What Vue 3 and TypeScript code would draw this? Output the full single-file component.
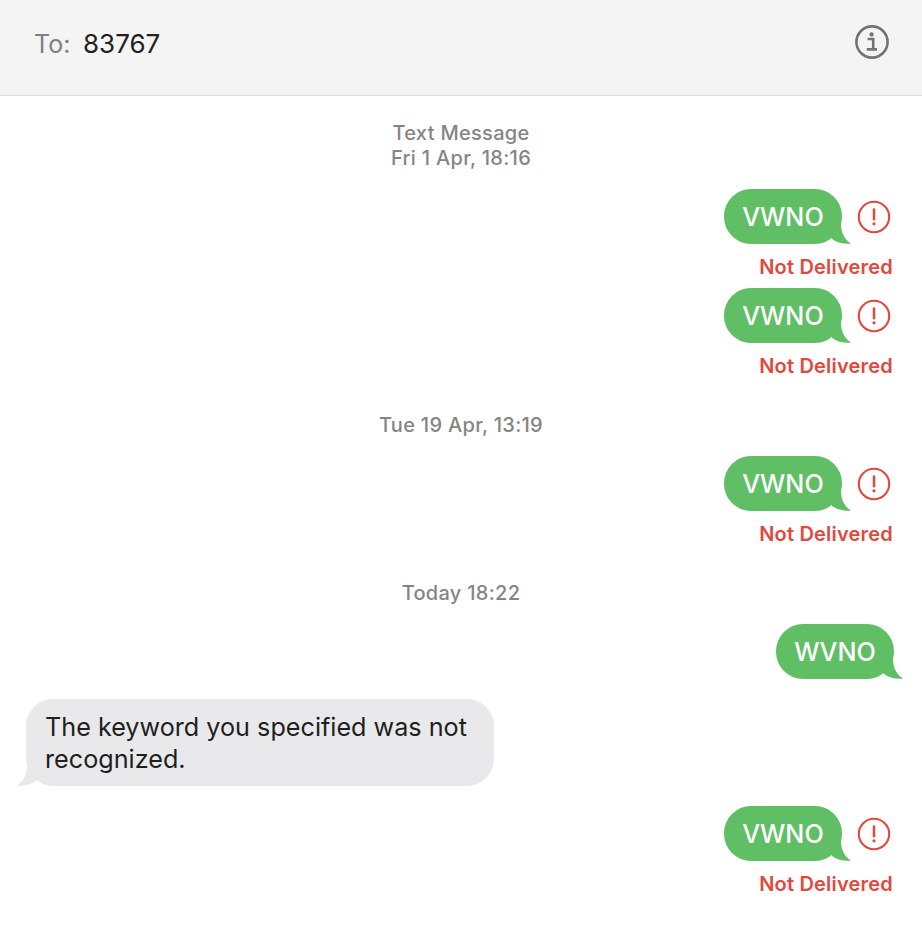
<template>
  <div class="conversation">
    <header class="conversation__header">
      <div class="conversation__recipient">
        <span class="conversation__to">To:</span>
        <span class="conversation__number">83767</span>
      </div>
      <svg class="conversation__info" width="36" height="36" viewBox="0 0 36 36" fill="none">
        <circle cx="18" cy="18" r="15.6" stroke="#737373" stroke-width="2.6" />
        <circle cx="17.6" cy="10.4" r="2.1" fill="#737373" />
        <path d="M13.6 15h5.6v10M12.8 25.4h10.2" stroke="#737373" stroke-width="2.6" />
      </svg>
    </header>

    <main class="conversation__body">
      <template v-for="block in blocks" :key="block.stamp.join()">
        <div class="stamp">
          <div v-for="line in block.stamp" :key="line">{{ line }}</div>
        </div>
        <div class="block">
          <template v-for="(msg, i) in block.messages" :key="i">
            <div v-if="msg.incoming" class="incoming">
              <div class="bubble bubble--gray">
                {{ msg.text }}
                <svg class="tail tail--left" width="22" height="20" viewBox="0 0 22 20">
                  <path d="M10 0C10 8 7 15 0 19.6C6 20.4 13 19 19 15L22 0Z" fill="#e9e9eb" />
                </svg>
              </div>
            </div>
            <div v-else class="outgoing" :class="{ 'outgoing--failed': msg.failed }">
              <div class="outgoing__row">
                <div class="bubble bubble--green">
                  {{ msg.text }}
                  <svg class="tail tail--right" width="22" height="20" viewBox="0 0 22 20">
                    <path d="M12 0C12 8 15 15 22 19.6C16 20.4 9 19 3 15L0 0Z" fill="#60bf65" />
                  </svg>
                </div>
                <svg v-if="msg.failed" class="alert" width="34" height="34" viewBox="0 0 34 34" fill="none">
                  <circle cx="17" cy="17" r="15.2" stroke="#e2483e" stroke-width="2.1" />
                  <path d="M17 9.6v9.6" stroke="#e2483e" stroke-width="2.5" stroke-linecap="round" />
                  <circle cx="17" cy="23.8" r="1.6" fill="#e2483e" />
                </svg>
              </div>
              <div v-if="msg.failed" class="outgoing__status">Not Delivered</div>
            </div>
          </template>
        </div>
      </template>
    </main>
  </div>
</template>

<script setup lang="ts">
interface Message {
  text: string;
  failed?: boolean;
  incoming?: boolean;
}

const blocks: { stamp: string[]; messages: Message[] }[] = [
  {
    stamp: ['Text Message', 'Fri 1 Apr, 18:16'],
    messages: [
      { text: 'VWNO', failed: true },
      { text: 'VWNO', failed: true },
    ],
  },
  {
    stamp: ['Tue 19 Apr, 13:19'],
    messages: [{ text: 'VWNO', failed: true }],
  },
  {
    stamp: ['Today 18:22'],
    messages: [
      { text: 'WVNO' },
      { text: 'The keyword you specified was not recognized.', incoming: true },
      { text: 'VWNO', failed: true },
    ],
  },
];
</script>

<style scoped>
.conversation {
  width: 922px;
  height: 952px;
  overflow: hidden;
  background: #fff;
  font-family: Inter, "Liberation Sans", sans-serif;
}

.conversation__header {
  height: 84px;
  border-bottom: 1px solid #dcdcdc;
  background: #f4f4f4;
  display: flex;
  align-items: center;
  justify-content: space-between;
  padding: 0 32px 11px 34px;
}

.conversation__recipient {
  display: flex;
  align-items: baseline;
  position: relative;
  top: 1px;
}

.conversation__to {
  color: #808080;
  font-size: 25px;
  width: 49px;
}

.conversation__number {
  color: #222;
  font-size: 26px;
}

.conversation__body {
  padding-top: 25px;
}

.stamp {
  color: #858585;
  font-size: 20px;
  font-weight: 500;
  letter-spacing: 0.3px;
  line-height: 25px;
  text-align: center;
}

.block {
  margin-top: 18px;
  margin-bottom: 46px;
  display: flex;
  flex-direction: column;
  gap: 20px;
}

.outgoing {
  display: flex;
  flex-direction: column;
  align-items: flex-end;
  padding-right: 28px;
}

.outgoing--failed {
  padding-right: 29px;
  margin-bottom: -11px;
}

.outgoing__row {
  display: flex;
  align-items: center;
  gap: 15px;
}

.outgoing--failed .outgoing__row {
  margin-right: 2px;
}

.outgoing__status {
  color: #e2483e;
  font-size: 20px;
  font-weight: 600;
  letter-spacing: 0.2px;
  line-height: 24px;
  margin-top: 11px;
}

.incoming {
  padding-left: 26px;
}

.bubble {
  position: relative;
  font-size: 25.2px;
  line-height: 32px;
  box-sizing: border-box;
}

.bubble--green {
  height: 55px;
  width: 118px;
  border-radius: 27px;
  background: #60bf65;
  color: #fff;
  font-weight: 450;
  display: flex;
  align-items: center;
  justify-content: center;
}

.bubble--gray {
  width: 468px;
  padding: 12px 19px 11px;
  border-radius: 27px;
  background: #e9e9eb;
  color: #1f1f1f;
}

.tail {
  position: absolute;
  bottom: 0;
}

.tail--right {
  right: -9px;
}

.tail--left {
  left: -9px;
}
</style>

<style>
html,
body {
  margin: 0;
  background: #fff;
}
</style>
